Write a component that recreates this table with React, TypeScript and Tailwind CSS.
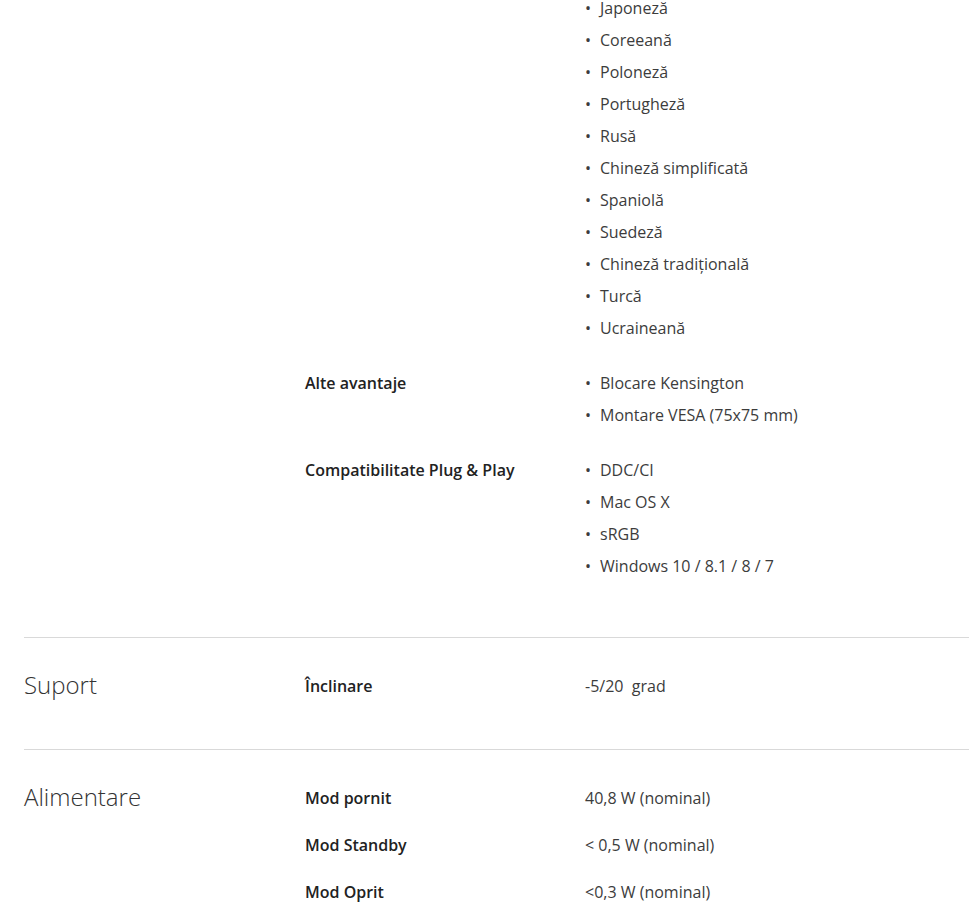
import React from "react";

type Row = { label: string; list?: string[]; value?: string };
type Section = { title?: string; rows: Row[]; first?: boolean };

const sections: Section[] = [
  {
    first: true,
    rows: [
      {
        label: "",
        list: [
          "Japoneză",
          "Coreeană",
          "Poloneză",
          "Portugheză",
          "Rusă",
          "Chineză simplificată",
          "Spaniolă",
          "Suedeză",
          "Chineză tradițională",
          "Turcă",
          "Ucraineană",
        ],
      },
      { label: "Alte avantaje", list: ["Blocare Kensington", "Montare VESA (75x75 mm)"] },
      {
        label: "Compatibilitate Plug & Play",
        list: ["DDC/CI", "Mac OS X", "sRGB", "Windows 10 / 8.1 / 8 / 7"],
      },
    ],
  },
  { title: "Suport", rows: [{ label: "Înclinare", value: "-5/20  grad" }] },
  {
    title: "Alimentare",
    rows: [
      { label: "Mod pornit", value: "40,8 W (nominal)" },
      { label: "Mod Standby", value: "< 0,5 W (nominal)" },
      { label: "Mod Oprit", value: "<0,3 W (nominal)" },
    ],
  },
];

export default function App() {
  return (
    <div
      className="min-h-[920px] w-[969px] overflow-hidden bg-white pl-6"
      style={{ fontFamily: '"Open Sans", "Noto Sans", sans-serif' }}
    >
      {sections.map((s, i) => (
        <div
          key={i}
          className={`flex ${s.first ? "-mt-[8px] pb-8" : "border-t border-[#d9d9d9] pt-8 pb-8"}`}
        >
          <div className="w-[281px] shrink-0 text-[24px] font-light leading-[30px] text-[#333]">
            {s.title}
          </div>
          <div className="flex flex-col">
            {s.rows.map((r, j) => (
              <div key={j} className={`flex ${r.list ? "mb-[23px]" : "mb-[15px]"}`}>
                <div className="w-[280px] shrink-0 text-[16px] font-semibold leading-[32px] text-[#222]">
                  {r.label}
                </div>
                {r.list ? (
                  <ul className="flex flex-col">
                    {r.list.map((it) => (
                      <li key={it} className="flex text-[16px] leading-[32px] text-[#3c3c3c]">
                        <span className="w-[15px] shrink-0">•</span>
                        <span>{it}</span>
                      </li>
                    ))}
                  </ul>
                ) : (
                  <div className="whitespace-pre text-[16px] leading-[32px] text-[#3c3c3c]">{r.value}</div>
                )}
              </div>
            ))}
          </div>
        </div>
      ))}
    </div>
  );
}
